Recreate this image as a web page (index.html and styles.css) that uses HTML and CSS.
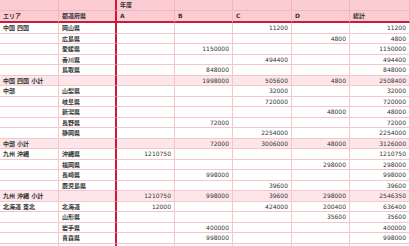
FILE: index.html
```html
<!DOCTYPE html>
<html lang="ja">
<head>
<meta charset="utf-8">
<link rel="stylesheet" href="styles.css">
</head>
<body>
<div class="pivot">
  <div class="row head h1">
    <div class="c"></div><div class="c pref"></div><div class="c">年度</div><div class="c"></div><div class="c"></div><div class="c"></div><div class="c"></div>
  </div>
  <div class="row head h2">
    <div class="c">エリア</div><div class="c pref">都道府県</div><div class="c">A</div><div class="c">B</div><div class="c">C</div><div class="c">D</div><div class="c">総計</div>
  </div>

  <div class="row"><div class="c lbl">中国 四国</div><div class="c pref lbl">岡山県</div><div class="c n"></div><div class="c n"></div><div class="c n">11200</div><div class="c n"></div><div class="c n">11200</div></div>
  <div class="row"><div class="c lbl"></div><div class="c pref lbl">広島県</div><div class="c n"></div><div class="c n"></div><div class="c n"></div><div class="c n">4800</div><div class="c n">4800</div></div>
  <div class="row"><div class="c lbl"></div><div class="c pref lbl">愛媛県</div><div class="c n"></div><div class="c n">1150000</div><div class="c n"></div><div class="c n"></div><div class="c n">1150000</div></div>
  <div class="row"><div class="c lbl"></div><div class="c pref lbl">香川県</div><div class="c n"></div><div class="c n"></div><div class="c n">494400</div><div class="c n"></div><div class="c n">494400</div></div>
  <div class="row"><div class="c lbl"></div><div class="c pref lbl">鳥取県</div><div class="c n"></div><div class="c n">848000</div><div class="c n"></div><div class="c n"></div><div class="c n">848000</div></div>
  <div class="row sub"><div class="c lbl">中国 四国 小計</div><div class="c pref lbl"></div><div class="c n"></div><div class="c n">1998000</div><div class="c n">505600</div><div class="c n">4800</div><div class="c n">2508400</div></div>

  <div class="row"><div class="c lbl">中部</div><div class="c pref lbl">山梨県</div><div class="c n"></div><div class="c n"></div><div class="c n">32000</div><div class="c n"></div><div class="c n">32000</div></div>
  <div class="row"><div class="c lbl"></div><div class="c pref lbl">岐阜県</div><div class="c n"></div><div class="c n"></div><div class="c n">720000</div><div class="c n"></div><div class="c n">720000</div></div>
  <div class="row"><div class="c lbl"></div><div class="c pref lbl">新潟県</div><div class="c n"></div><div class="c n"></div><div class="c n"></div><div class="c n">48000</div><div class="c n">48000</div></div>
  <div class="row"><div class="c lbl"></div><div class="c pref lbl">長野県</div><div class="c n"></div><div class="c n">72000</div><div class="c n"></div><div class="c n"></div><div class="c n">72000</div></div>
  <div class="row"><div class="c lbl"></div><div class="c pref lbl">静岡県</div><div class="c n"></div><div class="c n"></div><div class="c n">2254000</div><div class="c n"></div><div class="c n">2254000</div></div>
  <div class="row sub"><div class="c lbl">中部 小計</div><div class="c pref lbl"></div><div class="c n"></div><div class="c n">72000</div><div class="c n">3006000</div><div class="c n">48000</div><div class="c n">3126000</div></div>

  <div class="row"><div class="c lbl">九州 沖縄</div><div class="c pref lbl">沖縄県</div><div class="c n">1210750</div><div class="c n"></div><div class="c n"></div><div class="c n"></div><div class="c n">1210750</div></div>
  <div class="row"><div class="c lbl"></div><div class="c pref lbl">福岡県</div><div class="c n"></div><div class="c n"></div><div class="c n"></div><div class="c n">298000</div><div class="c n">298000</div></div>
  <div class="row"><div class="c lbl"></div><div class="c pref lbl">長崎県</div><div class="c n"></div><div class="c n">998000</div><div class="c n"></div><div class="c n"></div><div class="c n">998000</div></div>
  <div class="row"><div class="c lbl"></div><div class="c pref lbl">鹿児島県</div><div class="c n"></div><div class="c n"></div><div class="c n">39600</div><div class="c n"></div><div class="c n">39600</div></div>
  <div class="row sub"><div class="c lbl">九州 沖縄 小計</div><div class="c pref lbl"></div><div class="c n">1210750</div><div class="c n">998000</div><div class="c n">39600</div><div class="c n">298000</div><div class="c n">2546350</div></div>

  <div class="row"><div class="c lbl">北海道 東北</div><div class="c pref lbl">北海道</div><div class="c n">12000</div><div class="c n"></div><div class="c n">424000</div><div class="c n">200400</div><div class="c n">636400</div></div>
  <div class="row"><div class="c lbl"></div><div class="c pref lbl">山形県</div><div class="c n"></div><div class="c n"></div><div class="c n"></div><div class="c n">35600</div><div class="c n">35600</div></div>
  <div class="row"><div class="c lbl"></div><div class="c pref lbl">岩手県</div><div class="c n"></div><div class="c n">400000</div><div class="c n"></div><div class="c n"></div><div class="c n">400000</div></div>
  <div class="row"><div class="c lbl"></div><div class="c pref lbl">青森県</div><div class="c n"></div><div class="c n">998000</div><div class="c n"></div><div class="c n"></div><div class="c n">998000</div></div>
  <div class="row"><div class="c lbl"></div><div class="c pref lbl"></div><div class="c n"></div><div class="c n"></div><div class="c n"></div><div class="c n"></div><div class="c n"></div></div>
</div>
</body>
</html>
```
FILE: styles.css
```css
html {
  overflow: hidden;
}
html, body {
  margin: 0;
  padding: 0;
  background: #ffffff;
}
.pivot {
  display: grid;
  width: 410px;
  height: 246px;
  overflow: hidden;
  grid-template-columns: 59px 58px 58px 58px 59px 58px 60px;
  grid-template-rows: 10.5px 12.5px;
  grid-auto-rows: 10.5px;
  font-family: "DejaVu Sans", "Noto Sans CJK JP", sans-serif;
  font-size: 6px;
  color: #333333;
}
.row {
  display: contents;
}
.c {
  box-sizing: border-box;
  border-right: 1px solid #f6c6cd;
  border-bottom: 1px solid #f6c6cd;
  padding: 0 3px;
  line-height: 9.5px;
  white-space: nowrap;
  overflow: hidden;
}
.pref {
  border-right: 2px solid #cc1a3a;
}
.n {
  text-align: right;
}
.lbl {
  font-weight: bold;
}
.head .c {
  background: #fbcdd3;
  border-color: #f1b7bf;
  font-weight: bold;
}
.head .pref {
  border-right: 2px solid #cc1a3a;
}
.h2 .c {
  border-bottom: 2px solid #cc1a3a;
  line-height: 10.5px;
}
.sub .c {
  background: #fde6e9;
}
```
